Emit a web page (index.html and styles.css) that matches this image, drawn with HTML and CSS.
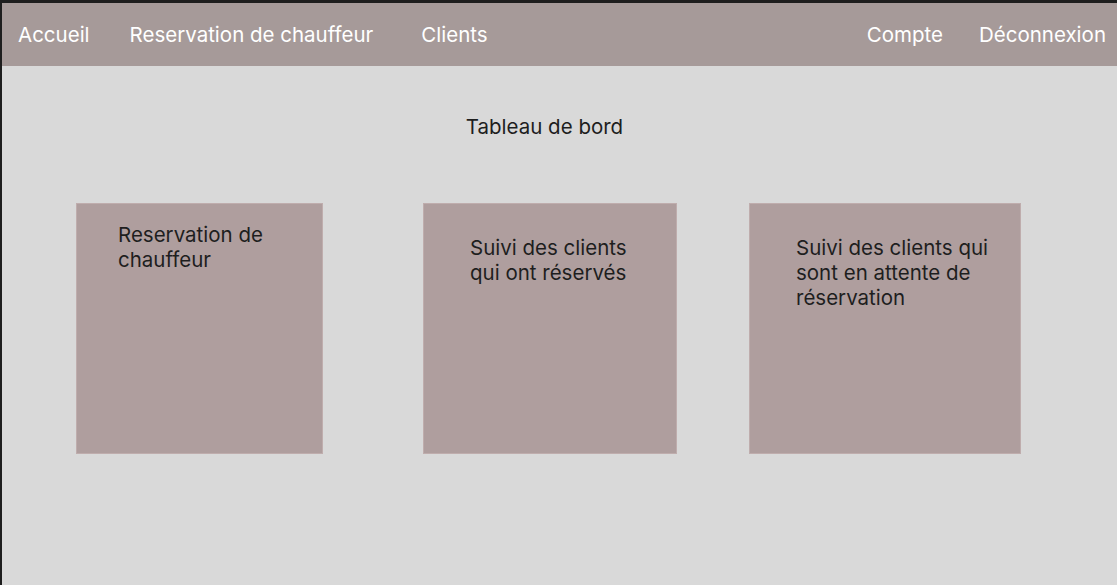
FILE: index.html
```html
<!DOCTYPE html>
<html lang="fr">
<head>
    <meta charset="UTF-8">
    <meta name="viewport" content="width=device-width, initial-scale=1.0">
    <title>Tableau de bord</title>
    <link rel="stylesheet" href="styles.css">
</head>
<body>

<div class="frame">
    <nav class="navbar">
        <a href="#" class="nav-link nav-home">Accueil</a>
        <a href="#" class="nav-link nav-booking">Reservation de chauffeur</a>
        <a href="#" class="nav-link nav-clients">Clients</a>
        <a href="#" class="nav-link nav-account">Compte</a>
        <a href="#" class="nav-link nav-logout">Déconnexion</a>
    </nav>

    <main class="content">
        <h1 class="page-title">Tableau de bord</h1>

        <div class="cards">
            <div class="card card-booking">
                <p>Reservation de<br>chauffeur</p>
            </div>
            <div class="card card-booked">
                <p>Suivi des clients<br>qui ont réservés</p>
            </div>
            <div class="card card-waiting">
                <p>Suivi des clients qui<br>sont en attente de<br>réservation</p>
            </div>
        </div>
    </main>
</div>

</body>
</html>
```

FILE: styles.css
```css
body {
    margin: 0;
    font-family: 'Inter', 'Liberation Sans', sans-serif;
    background-color: #1e1e1e;
}
.frame {
    margin-top: 3px;
    margin-left: 2px;
    height: 582px;
    background-color: #d9d9d9;
    display: flex;
    flex-direction: column;
}
.navbar {
    height: 63px;
    background-color: #a69a99;
    display: flex;
    align-items: center;
}
.nav-link {
    color: #ffffff;
    text-decoration: none;
    font-size: 20.5px;
    line-height: 24px;
}
.nav-home {
    margin-left: 16px;
}
.nav-booking {
    margin-left: 40px;
}
.nav-clients {
    margin-left: 48px;
}
.nav-account {
    margin-left: auto;
}
.nav-logout {
    margin-left: 36px;
    margin-right: 11px;
}
.content {
    flex: 1;
}
.page-title {
    margin: 49px 0 0;
    text-align: center;
    font-size: 20.5px;
    line-height: 24px;
    font-weight: 400;
    color: #1e1e1e;
    padding-right: 30px;
}
.cards {
    display: flex;
    margin-top: 64px;
    padding-left: 74px;
}
.card {
    height: 251px;
    box-sizing: border-box;
    background-color: #af9e9e;
    border: 1px solid #bfadad;
    color: #1e1e1e;
    font-size: 20.5px;
    line-height: 25px;
}
.card p {
    margin: 0;
}
.card-booking {
    width: 247px;
    padding: 18px 0 0 41px;
}
.card-booked {
    margin-left: 100px;
    width: 254px;
    padding: 31px 0 0 46px;
}
.card-waiting {
    margin-left: 72px;
    width: 272px;
    padding: 31px 0 0 46px;
}
```
